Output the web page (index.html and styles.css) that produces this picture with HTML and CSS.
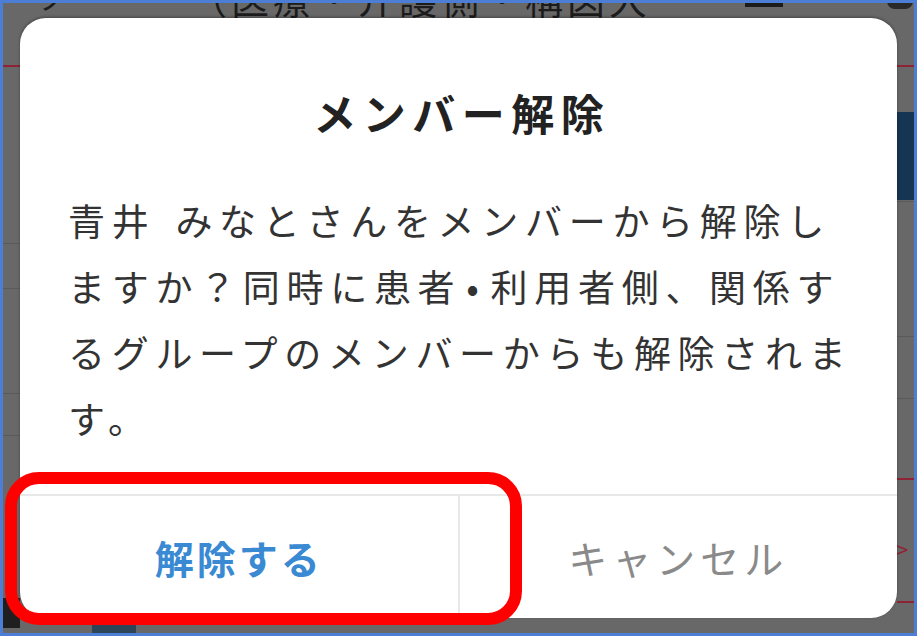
FILE: index.html
```html
<!DOCTYPE html>
<html lang="ja">
<head>
<meta charset="utf-8">
<title>メンバー解除</title>
<link rel="stylesheet" href="styles.css">
</head>
<body>
<div class="screen">
  <div class="backdrop">
    <div class="bg-heading">（医療・介護側・構図大</div>
    <div class="bg-mark bg-mark-left">ノ ・</div>
    <div class="bg-bar"></div>
    <div class="bg-knob"></div>
    <div class="bg-rule bg-rule-red bg-l" style="top:62px"></div>
    <div class="bg-rule bg-rule-red bg-r" style="top:62px"></div>
    <div class="bg-navy"></div>
    <div class="bg-rule bg-rule-gray bg-l" style="top:240px"></div>
    <div class="bg-rule bg-rule-gray bg-l" style="top:285px"></div>
    <div class="bg-rule bg-rule-gray bg-l" style="top:390px"></div>
    <div class="bg-rule bg-rule-gray bg-l" style="top:432px"></div>
    <div class="bg-rule bg-rule-gray bg-r" style="top:198px"></div>
    <div class="bg-rule bg-rule-gray bg-r" style="top:333px"></div>
    <div class="bg-rule bg-rule-gray bg-r" style="top:395px"></div>
    <div class="bg-rule bg-rule-red bg-r" style="top:475px"></div>
    <div class="bg-rule bg-rule-red bg-r" style="top:598px"></div>
    <div class="bg-glyph">&lt;</div>
    <div class="bg-dark-corner"></div>
    <div class="bg-tab"></div>
  </div>

  <div class="dialog">
    <h2 class="dialog-title">メンバー解除</h2>
    <p class="dialog-message">青井 みなとさんをメンバーから解除しますか？同時に患者<span class="dot">•</span>利用者側、関係するグループのメンバーからも解除されます。</p>
    <div class="dialog-actions">
      <button class="action action-primary" type="button">解除する</button>
      <button class="action action-cancel" type="button">キャンセル</button>
    </div>
  </div>

  <div class="highlight"></div>
</div>
</body>
</html>
```

FILE: styles.css
```css
* { box-sizing: border-box; }

html, body {
  margin: 0;
  padding: 0;
}

body {
  font-family: "Noto Sans CJK JP", "Noto Sans", sans-serif;
  background: #686868;
}

.screen {
  position: relative;
  width: 917px;
  height: 636px;
  border: 3px solid #4d7ed6;
  background: #686868;
  padding: 15px 17px 15px 17px;
  display: flex;
  overflow: hidden;
}

/* ---------- dimmed page behind the dialog ---------- */
.backdrop {
  position: absolute;
  inset: 0;
  z-index: 0;
}

.bg-heading {
  position: absolute;
  left: 186px;
  top: -27px;
  font-size: 38px;
  line-height: 44px;
  letter-spacing: 4px;
  color: #1c1c1c;
  white-space: nowrap;
}

.bg-mark {
  position: absolute;
  top: -24px;
  font-size: 30px;
  line-height: 36px;
  color: #1c1c1c;
}
.bg-mark-left { left: 36px; }

.bg-bar {
  position: absolute;
  left: 742px;
  top: 0;
  width: 38px;
  height: 4px;
  background: #1c1c1c;
}

.bg-knob {
  position: absolute;
  left: 884px;
  top: -6px;
  width: 26px;
  height: 12px;
  border-radius: 0 0 8px 8px;
  background: #2a2a2a;
}

.bg-rule {
  position: absolute;
  height: 2px;
}
.bg-rule-red { background: #8e2336; }
.bg-rule-gray { background: #5a5a5a; height: 1px; }
.bg-l { left: 0; width: 17px; }
.bg-r { left: 894px; width: 20px; }

.bg-navy {
  position: absolute;
  left: 894px;
  width: 20px;
  top: 109px;
  height: 88px;
  background: #163553;
}

.bg-glyph {
  position: absolute;
  left: 893px;
  top: 530px;
  font-size: 22px;
  line-height: 30px;
  color: #8e2336;
  transform: scaleX(-1);
}

.bg-dark-corner {
  position: absolute;
  left: 0;
  top: 595px;
  width: 17px;
  height: 30px;
  background: #1f1f1f;
}

.bg-tab {
  position: absolute;
  left: 89px;
  top: 619px;
  width: 44px;
  height: 20px;
  background: #2c4657;
}

/* ---------- dialog ---------- */
.dialog {
  position: relative;
  z-index: 1;
  flex: 1;
  display: flex;
  flex-direction: column;
  background: #ffffff;
  border-radius: 26px;
  overflow: hidden;
  box-shadow: 0 -1px 3px rgba(0, 0, 0, 0.35);
}

.dialog-title {
  margin: 66px 0 0;
  text-align: center;
  font-size: 43px;
  line-height: 56px;
  font-weight: 700;
  letter-spacing: 6.5px;
  text-indent: 6.5px;
  color: #222222;
}

.dialog-message {
  margin: 47px 0 0;
  padding: 0 0 0 48px;
  width: 842px;
  font-size: 37px;
  line-height: 66px;
  letter-spacing: 6.7px;
  word-spacing: 5px;
  color: #333333;
}

.dot {
  padding: 0 5px;
}

.dialog-actions {
  margin-top: auto;
  height: 124px;
  display: flex;
  border-top: 2px solid #e8e8e8;
}

.action {
  flex: 1;
  margin: 0;
  padding: 0;
  border: 0;
  background: transparent;
  font-family: inherit;
  font-size: 39px;
  line-height: 50px;
  cursor: pointer;
}

.action-primary {
  color: #3a89d3;
  font-weight: 700;
  letter-spacing: 3px;
}

.action-cancel {
  color: #8a8a8a;
  font-weight: 400;
  letter-spacing: 5px;
  border-left: 2px solid #e8e8e8;
}

/* ---------- red annotation ---------- */
.highlight {
  position: absolute;
  z-index: 2;
  left: 2px;
  top: 469px;
  width: 517px;
  height: 153px;
  border: 12px solid #ff0000;
  border-radius: 34px;
  pointer-events: none;
}
```
